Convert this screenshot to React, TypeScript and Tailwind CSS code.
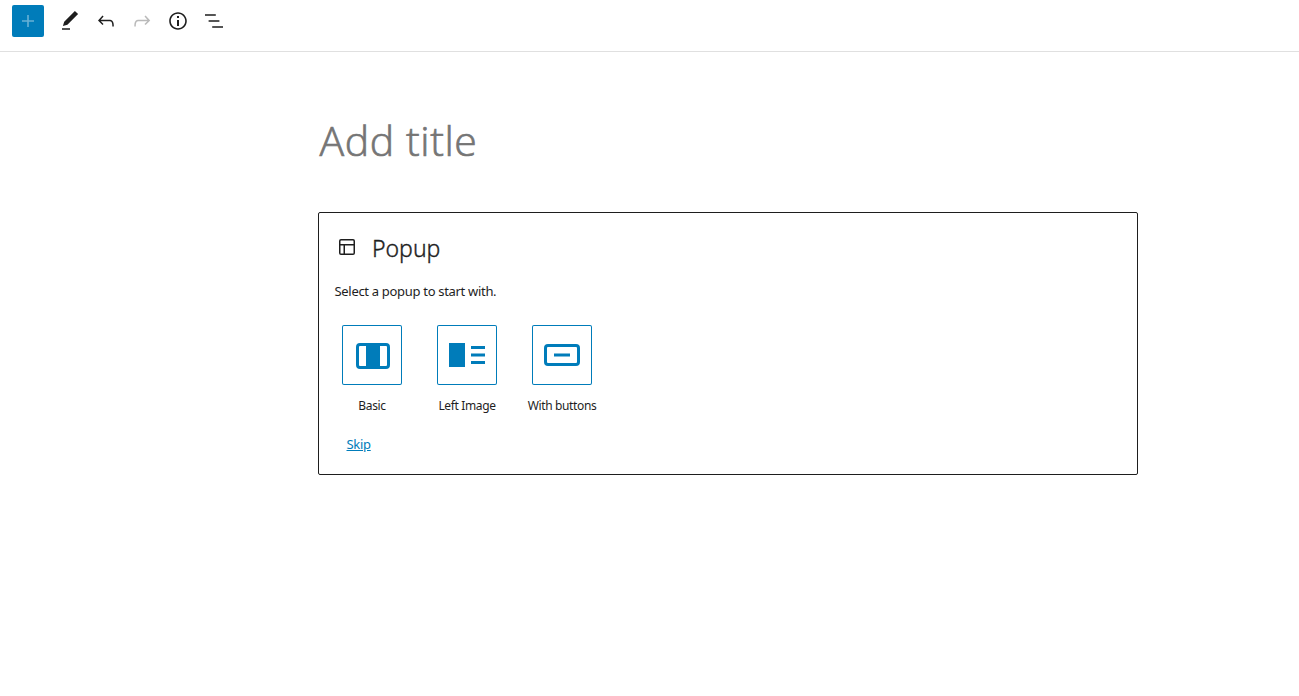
import type { ReactNode } from 'react';

function Icon({ d, className = '' }: { d: string; className?: string }) {
  return (
    <svg viewBox="0 0 24 24" width="24" height="24" fill="currentColor" className={className}>
      <path d={d} />
    </svg>
  );
}

const tools = [
  { label: 'Tools', d: 'M20.1 5.1L16.9 2 6.2 12.7l-1.3 4.4 4.5-1.3L20.1 5.1zM4 20.8h8v-1.5H4v1.5z' },
  { label: 'Undo', d: 'M18.3 11.7c-.6-.6-1.4-.9-2.3-.9H6.7l2.9-3.3-1.1-1-4.5 5L8.5 16l1-1-2.7-2.7H16c.5 0 .9.2 1.3.5 1 1 1 3.4 1 4.5v.3h1.5v-.2c0-1.5 0-4.3-1.5-5.7z' },
  { label: 'Redo', disabled: true, d: 'M15.6 6.5l-1.1 1 2.9 3.3H8c-.9 0-1.7.3-2.3.9-1.4 1.5-1.4 4.2-1.4 5.6v.2h1.5v-.3c0-1.1 0-3.5 1-4.5.3-.3.7-.5 1.3-.5h9.2L14.5 15l1.1 1.1 4.6-4.6-4.6-5z' },
  { label: 'Details', d: 'M12 3.2c-4.8 0-8.8 3.9-8.8 8.8 0 4.8 3.9 8.8 8.8 8.8 4.8 0 8.8-3.9 8.8-8.8 0-4.8-4-8.8-8.8-8.8zm0 16c-4 0-7.2-3.3-7.2-7.2C4.8 8 8 4.8 12 4.8s7.2 3.3 7.2 7.2c0 4-3.2 7.2-7.2 7.2zM11 17h2v-6h-2v6zm0-8h2V7h-2v2z' },
  { label: 'List view', d: 'M13.8 5.2H3v1.5h10.8V5.2zm-3.6 12v1.5H21v-1.5H10.2zm7.2-6H6.6v1.5h10.8v-1.5z' },
];

const variations: { label: string; art: ReactNode }[] = [
  {
    label: 'Basic',
    art: (
      <>
        <rect x="15.5" y="19.5" width="31" height="23" rx="2.5" fill="none" stroke="currentColor" strokeWidth="3" />
        <rect x="24" y="19" width="14" height="24" />
      </>
    ),
  },
  {
    label: 'Left Image',
    art: (
      <>
        <rect x="12" y="18" width="16" height="24" />
        <rect x="34" y="21" width="14" height="3" />
        <rect x="34" y="28.5" width="14" height="3" />
        <rect x="34" y="36" width="14" height="3" />
      </>
    ),
  },
  {
    label: 'With buttons',
    art: (
      <>
        <rect x="13.5" y="20.5" width="33" height="19" rx="2.5" fill="none" stroke="currentColor" strokeWidth="3" />
        <rect x="22" y="28.5" width="16" height="3" />
      </>
    ),
  },
];

export default function App() {
  return (
    <div className="h-[696px] overflow-hidden bg-white font-['Noto_Sans','Open_Sans',sans-serif] text-[#1e1e1e]">
      <header className="flex h-[52px] items-start border-b border-[#e0e0e0] pt-[5px] pl-3">
        <button aria-label="Add block" className="flex size-8 items-center justify-center rounded-[2px] bg-[#007cba] text-white">
          <Icon d="M18 11.2h-5.2V6h-1.6v5.2H6v1.6h5.2V18h1.6v-5.2H18z" className="opacity-40" />
        </button>
        <div className="ml-2 flex">
          {tools.map((t) => (
            <button key={t.label} aria-label={t.label} disabled={t.disabled} className="flex h-8 w-9 items-center justify-center disabled:opacity-30">
              <Icon d={t.d} />
            </button>
          ))}
        </div>
      </header>
      <main className="ml-[318px] w-[820px] pt-[59px]">
        <h1 className="h-[58px] pl-[1.5px] font-['Open_Sans',sans-serif] text-[41px] leading-[58px] font-light tracking-[0.6px] whitespace-nowrap text-[#757575] [-webkit-text-stroke:0.7px_#757575]">Add title</h1>
        <section className="mt-[43px] h-[263px] rounded-[2px] border border-[#1e1e1e] px-[15px]">
          <h2 className="mt-[17px] flex h-9 items-center pl-px">
            <Icon d="M18 5.5H6a.5.5 0 00-.5.5v3h13V6a.5.5 0 00-.5-.5zm.5 5H10v8h8a.5.5 0 00.5-.5v-7.5zm-10 0h-3V18a.5.5 0 00.5.5h2.5v-8zM6 4h12a2 2 0 012 2v12a2 2 0 01-2 2H6a2 2 0 01-2-2V6a2 2 0 012-2z" className="mr-[13px] mb-[3px]" />
            <span className="text-[23px] leading-9 font-light [-webkit-text-stroke:0.35px_#1e1e1e]">Popup</span>
          </h2>
          <p className="mt-[15px] h-5 pl-[0.5px] text-[13px] leading-5 tracking-[-0.31px]">Select a popup to start with.</p>
          <ul className="mt-[24px] flex gap-[19px]">
            {variations.map((v) => (
              <li key={v.label} className="flex w-[76px] flex-col items-center">
                <button aria-label={v.label} className="rounded-[2px] text-[#007cba] ring-1 ring-inset ring-[#007cba]">
                  <svg viewBox="0 0 60 60" width="60" height="60" fill="currentColor">{v.art}</svg>
                </button>
                <span className="mt-[13px] text-[12px] leading-4 tracking-[-0.36px] whitespace-nowrap">{v.label}</span>
              </li>
            ))}
          </ul>
          <a href="#" className="mt-[20px] ml-[12.5px] inline-block text-[13px] leading-5 tracking-[-0.3px] text-[#007cba] underline">Skip</a>
        </section>
      </main>
    </div>
  );
}
